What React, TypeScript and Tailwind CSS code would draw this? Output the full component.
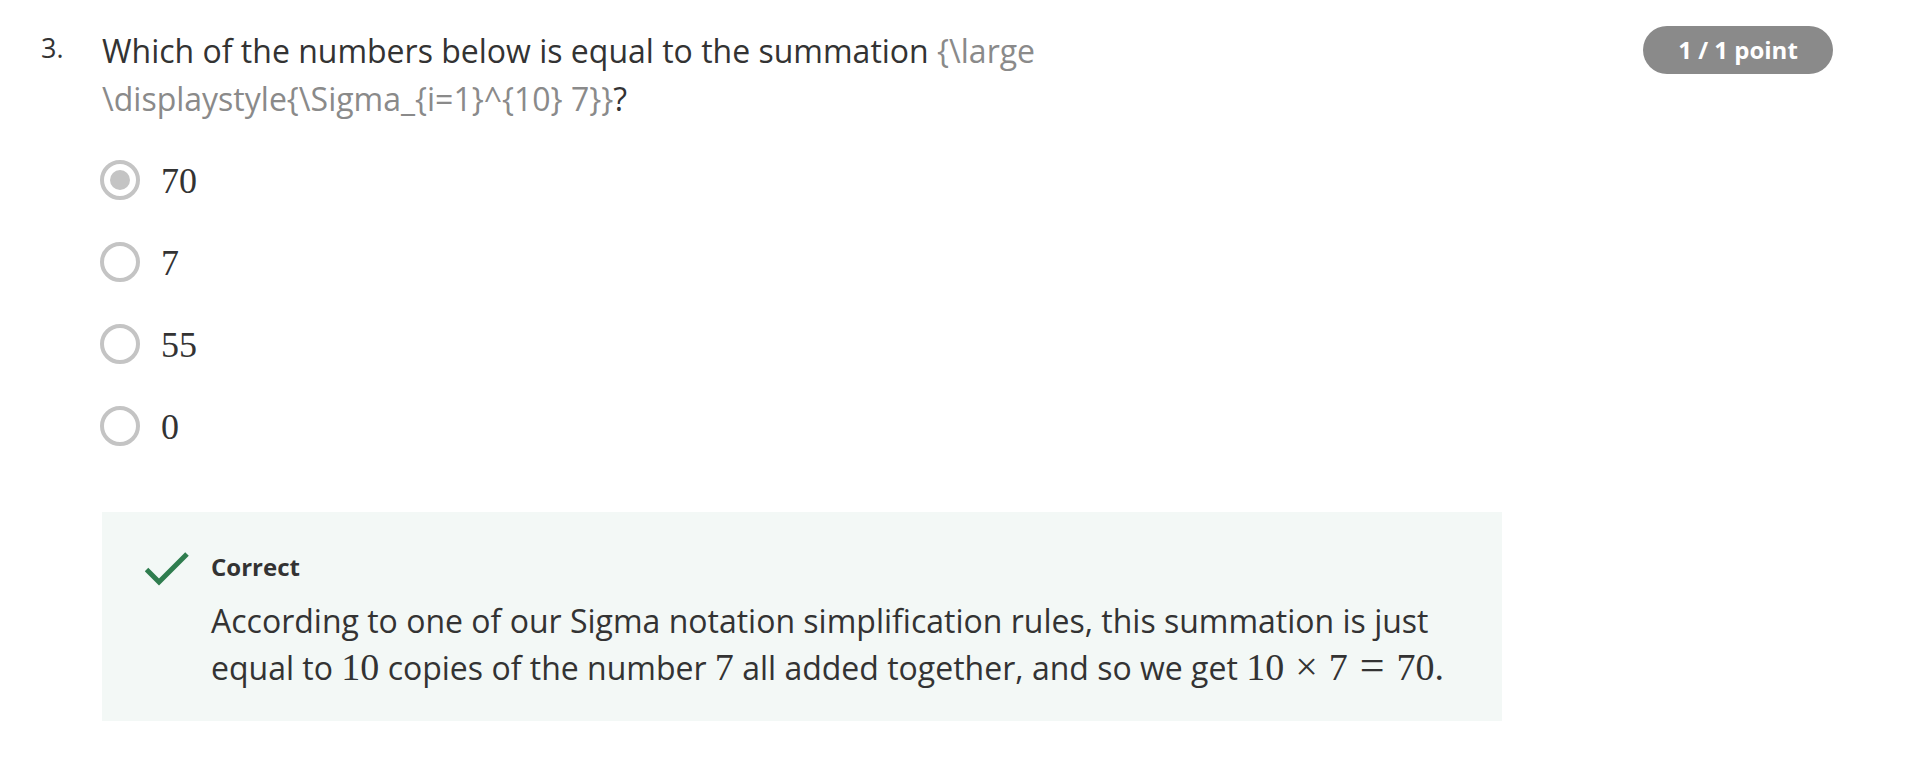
import React from "react";

const sans = { fontFamily: '"Open Sans", "Noto Sans", sans-serif' };

function Radio({ checked }: { checked?: boolean }) {
  return (
    <span className="flex h-[40px] w-[40px] shrink-0 items-center justify-center rounded-full border-[4px] border-[#c4c4c4] bg-white">
      {checked ? <span className="h-[20px] w-[20px] rounded-full bg-[#c4c4c4]" /> : null}
    </span>
  );
}

function M({ children }: { children: React.ReactNode }) {
  return (
    <span className="font-['Liberation_Serif',serif] text-[38px] leading-none text-[#333333]">{children}</span>
  );
}

export default function App() {
  const options = [
    { label: "70", checked: true },
    { label: "7" },
    { label: "55" },
    { label: "0" },
  ];
  return (
    <div className="min-h-[780px] w-[1914px] bg-white text-[#333333]" style={sans}>
      <div className="flex pl-[41px] pr-[81px] pt-[26px]">
        <div className="w-[61px] shrink-0 pt-[4px] text-[27px] leading-[36px]">3.</div>
        <div className="flex-1">
          <p className="mt-[1px] max-w-[1300px] text-[32px] leading-[48px]">
            Which of the numbers below is equal to the summation{" "}
            <span className="text-[#8a8a8a]">{"{\\large \\displaystyle{\\Sigma_{i=1}^{10} 7}}"}</span>?
          </p>
          <div className="-ml-[2px] mt-[16px] flex flex-col">
            {options.map((o) => (
              <div key={o.label} className="flex h-[82px] items-center gap-[21px]">
                <Radio checked={o.checked} />
                <span className="mt-[2px] font-['Liberation_Serif',serif] text-[36px] leading-none text-[#333333]">
                  {o.label}
                </span>
              </div>
            ))}
          </div>
          <div className="mt-[45px] flex w-[1400px] gap-[22px] bg-[#f3f8f6] pb-[30px] pl-[43px] pr-[40px] pt-[37px]">
            <svg width="44" height="34" viewBox="0 0 44 34" className="mt-[3px] shrink-0">
              <polyline points="1.5,17.5 14,30 42,2" fill="none" stroke="#2f7d4f" strokeWidth="5" />
            </svg>
            <div className="flex-1">
              <div className="text-[24px] font-bold leading-[36px] text-[#333333]">Correct</div>
              <p className="mt-[12px] text-[32px] leading-[47px] text-[#333333]">
                According to one of our Sigma notation simplification rules, this summation is just equal to{" "}
                <M>10</M> copies of the number <M>7</M> all added together, and so we get{" "}
                <M>
                  10<span className="mx-[11px] text-[40px]">×</span>7
                  <span className="mx-[12px] text-[44px]">=</span>70.
                </M>
              </p>
            </div>
          </div>
        </div>
        <div className="shrink-0">
          <span className="inline-flex h-[48px] w-[190px] items-center justify-center rounded-full bg-[#8a8a8a] text-[24px] font-bold text-white">
            1 / 1 point
          </span>
        </div>
      </div>
    </div>
  );
}
